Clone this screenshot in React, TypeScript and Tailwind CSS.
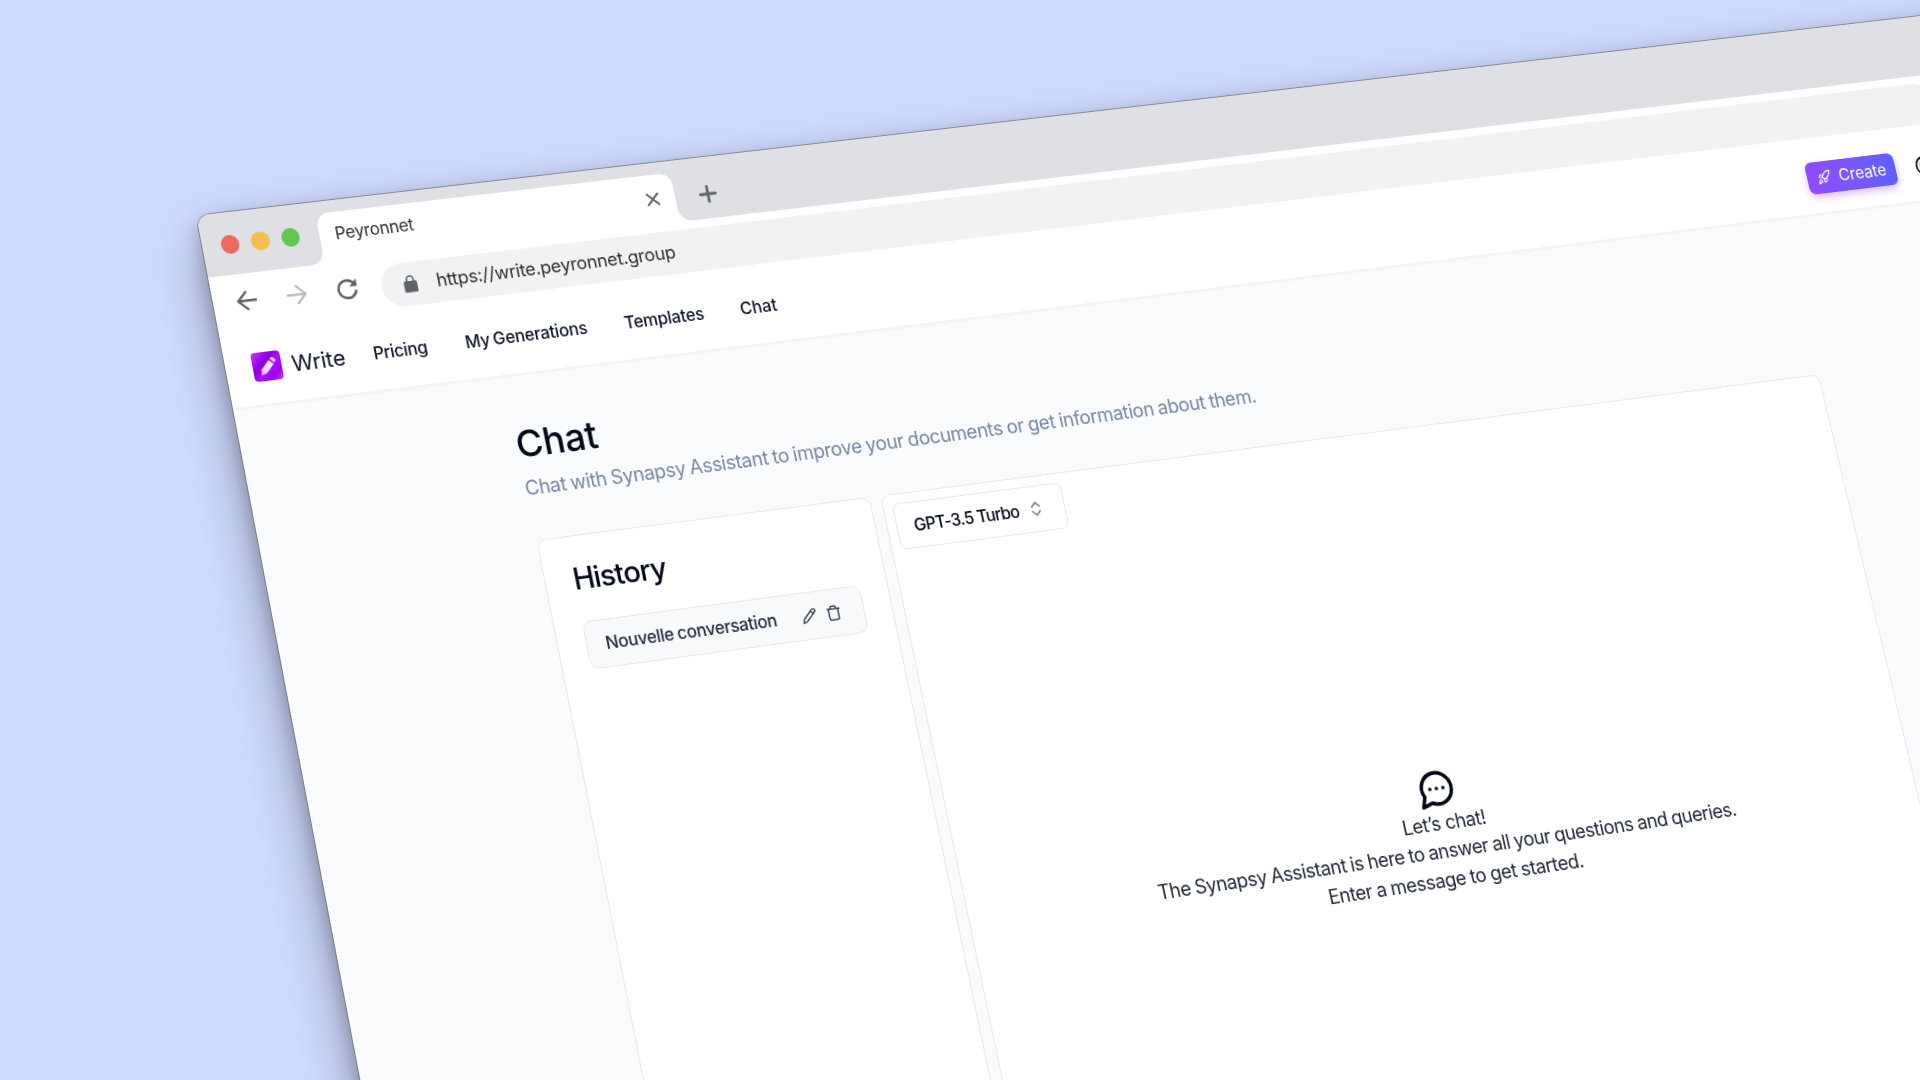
import React from 'react';
import { ChevronsUpDown, Pencil, Rocket } from 'lucide-react';

function TrafficLights() {
  return (
    <div className="flex gap-[11.9px] pl-[18.8px] pt-[23px]">
      <span className="size-[18.5px] rounded-full bg-[#ed6a5e]" />
      <span className="size-[18.5px] rounded-full bg-[#f5bf4f]" />
      <span className="size-[18.5px] rounded-full bg-[#62c554]" />
    </div>
  );
}

function TabStrip() {
  return (
    <div className="flex h-[62.7px] bg-[#dfe0e4]">
      <div className="w-[103.6px]">
        <TrafficLights />
      </div>
      <div className="size-[14px] self-end bg-white">
        <div className="h-full rounded-br-[14px] bg-[#dfe0e4]" />
      </div>
      <div className="mt-[11.6px] flex w-[365.3px] items-center justify-between rounded-t-[13px] bg-white pl-[16.2px] pr-[16.2px]">
        <span className="-mt-[6px] text-[17.2px] leading-5 tracking-[-0.32px] text-[#2f3032]">Peyronnet</span>
        <svg viewBox="0 0 14 14" className="size-[14px]" stroke="#5f6368" strokeWidth="2" fill="none" strokeLinecap="round">
          <path d="M1.5 1.5l11 11M12.5 1.5l-11 11" />
        </svg>
      </div>
      <div className="size-[14px] self-end bg-white">
        <div className="h-full rounded-bl-[14px] bg-[#dfe0e4]" />
      </div>
      <svg viewBox="0 0 18 18" className="ml-[11.4px] mt-[28.5px] size-[18px]" stroke="#5f6368" strokeWidth="2.8" fill="none" strokeLinecap="round">
        <path d="M9 1.2v15.6M1.2 9h15.6" />
      </svg>
    </div>
  );
}

function Toolbar() {
  return (
    <div className="flex h-[58.3px] items-start bg-white pt-[8px]">
      <div className="flex h-[39.5px] w-[170px] items-center">
        <svg viewBox="0 0 20 20" className="ml-[23.5px] size-[20.5px]" fill="none" stroke="#5f6368" strokeWidth="2.3" strokeLinecap="round" strokeLinejoin="round">
          <path d="M19 10H1.6M9.6 1.6L1.2 10l8.4 8.4" />
        </svg>
        <svg viewBox="0 0 20 20" className="ml-[30.2px] size-[20.5px]" fill="none" stroke="#babcbe" strokeWidth="2.3" strokeLinecap="round" strokeLinejoin="round">
          <path d="M1 10h17.4M10.4 1.6l8.4 8.4-8.4 8.4" />
        </svg>
        <svg viewBox="0 0 21 21" className="ml-[30px] size-[21px]" fill="none" stroke="#5f6368" strokeWidth="2.5">
          <path d="M17.8 5.8A8.9 8.9 0 1 0 19.2 12.6" />
          <path d="M20.4 1v7.6h-7.6z" fill="#5f6368" stroke="none" />
        </svg>
      </div>
      <div className="flex h-[44.2px] w-[1675px] items-center rounded-full bg-[#f1f2f4] pl-[22px]">
        <svg viewBox="0 0 15 19" className="h-[18px] w-[14.5px]" fill="#5f6368">
          <rect x="0.4" y="6.4" width="14.2" height="12.2" rx="1.8" />
          <path d="M3.9 7V4.6a3.6 3.6 0 0 1 7.2 0V7" fill="none" stroke="#5f6368" strokeWidth="1.7" />
        </svg>
        <span className="-mt-[2.5px] ml-[19.2px] text-[18.3px] leading-5 tracking-[-0.26px] text-[#2f3032]">https://write.peyronnet.group</span>
      </div>
    </div>
  );
}

function Logo() {
  return (
    <svg viewBox="0 0 29 29" className="-mt-[1.5px] size-[29px]">
      <defs>
        <linearGradient id="logo-bg" x1="0" y1="0" x2="1" y2="1">
          <stop offset="0" stopColor="#c83cff" />
          <stop offset="0.22" stopColor="#a80ff8" />
          <stop offset="0.38" stopColor="#8a00d4" />
          <stop offset="0.55" stopColor="#b010ff" />
          <stop offset="0.78" stopColor="#a000f5" />
          <stop offset="1" stopColor="#cc3cff" />
        </linearGradient>
        <linearGradient id="logo-pen" x1="1" y1="0" x2="0" y2="1">
          <stop offset="0" stopColor="#e6b8ff" />
          <stop offset="0.35" stopColor="#fff5ff" />
          <stop offset="1" stopColor="#e3a8ff" />
        </linearGradient>
      </defs>
      <rect width="29" height="29" rx="4" fill="url(#logo-bg)" />
      <path d="M17 8.9l4.2 4.1-8 8.2-5.4 1.6 1.2-5.6z" fill="url(#logo-pen)" strokeLinejoin="round" stroke="#ecc4ff" strokeWidth="0.6" />
      <path d="M18.2 7.7l1.1-1.1a1.7 1.7 0 0 1 2.4 0l1.6 1.6a1.7 1.7 0 0 1 0 2.4l-1.1 1.1z" fill="#efcaff" />
    </svg>
  );
}

function NavBar() {
  return (
    <header className="relative flex h-[74.3px] items-center bg-white pl-[26.8px] text-[17px] font-[450] leading-6 text-[#0b1324] shadow-[0_2px_3px_rgba(15,23,42,0.045)]">
      <Logo />
      <span className="-mt-px ml-[10.4px] w-[82.5px] text-[21.9px] font-normal tracking-[-0.1px]">Write</span>
      <nav className="-mt-px flex grow">
        <a className="w-[93.6px] tracking-[-0.3px]">Pricing</a>
        <a className="w-[163.4px] tracking-[-0.2px] [word-spacing:-1px]">My Generations</a>
        <a className="w-[120.2px] tracking-[-0.2px]">Templates</a>
        <a>Chat</a>
      </nav>
      <button className="mr-[21.6px] flex h-[33.3px] w-[99.8px] items-center rounded-[7px] bg-linear-to-r from-[#904bff] to-[#5c60ff] pl-[10.5px] font-normal text-white shadow-[0_4px_8px_rgba(147,51,234,0.3)]">
        <Rocket className="size-[16px]" strokeWidth={1.8} />
        <span className="ml-[8.9px] text-[17.3px] tracking-[-0.15px]">Create</span>
      </button>
      <svg viewBox="0 0 24 24" className="mr-[91.4px] size-[23px]" fill="none" stroke="currentColor" strokeWidth="2">
        <circle cx="12" cy="12" r="10" />
        <ellipse cx="12.5" cy="12" rx="5.5" ry="6" />
      </svg>
    </header>
  );
}

function HistoryCard() {
  return (
    <section className="h-[900px] w-[344px] rounded-[9.5px] border border-[#e4eaf2] bg-white pl-[28px] pt-[26.5px]">
      <h2 className="-ml-[0.3px] text-[29.3px] font-medium leading-[34px] tracking-[-0.9px]">History</h2>
      <div className="-ml-[0.7px] mt-[25px] flex h-[47.6px] w-[286.6px] items-center rounded-[9.5px] border border-[#e4eaf2] bg-[#f8fafc] pl-[19.3px] pr-[22.7px]">
        <span className="mt-px grow text-[17.2px] font-[450] leading-6 tracking-[-0.35px] [word-spacing:-0.5px] text-[#232b3d]">Nouvelle conversation</span>
        <Pencil className="size-[16px] text-[#232b3d]" strokeWidth={1.8} />
        <svg viewBox="0 0 24 24" className="ml-[9px] size-[16.5px]" fill="none" stroke="#232b3d" strokeWidth="1.9" strokeLinecap="round" strokeLinejoin="round">
          <path d="M3 6h18M19 6v14a2 2 0 0 1-2 2H7a2 2 0 0 1-2-2V6M8 6V4a2 2 0 0 1 2-2h4a2 2 0 0 1 2 2v2" />
        </svg>
      </div>
    </section>
  );
}

function ChatCard() {
  return (
    <section className="h-[900px] w-[1017px] rounded-[9.5px] border border-[#e4eaf2] bg-white px-[9.7px] pt-[9.8px]">
      <div className="flex h-[46.4px] w-[176.3px] items-center rounded-[7px] border border-[#e4eaf2] pl-[17px] text-[16.9px] font-[450] leading-6 tracking-[-0.63px]">
        <span className="mt-[1.5px] w-[119.2px]">GPT-3.5 Turbo</span>
        <ChevronsUpDown className="size-[19px] opacity-50" strokeWidth={2} />
      </div>
      <div className="mt-[287.8px] flex flex-col items-center text-[19.6px] leading-[28.6px] text-[#1d2434]">
        <svg viewBox="0 0 24 24" className="size-[42px]" fill="none" stroke="#020817" strokeWidth="2.1" strokeLinecap="round" strokeLinejoin="round">
          <path d="M7.9 20A9 9 0 1 0 4 16.1L2 22Z" />
          <path d="M8 12h.01M12 12h.01M16 12h.01" />
        </svg>
        <p className="tracking-[-0.45px]">Let’s chat!</p>
        <p className="tracking-[-0.5px] [word-spacing:-0.7px]">The Synapsy Assistant is here to answer all your questions and queries.</p>
        <p className="tracking-[-0.42px] [word-spacing:-0.6px]">Enter a message to get started.</p>
      </div>
    </section>
  );
}

export default function App() {
  return (
    <div className="h-[1080px] w-[1920px] overflow-hidden bg-[#cfdbff]" style={{ fontFamily: 'Inter, "Liberation Sans", sans-serif' }}>
      <div className="h-[1400px] w-[1920px] origin-top-left rounded-[13px] shadow-[0_0_0_1px_rgba(110,108,104,0.65),0_8px_20px_rgba(0,0,0,0.25),0_26px_56px_rgba(0,0,0,0.36)] [transform:matrix3d(1.00049,-0.107247,0,0.000036355,0.1808,0.97623,0,-0.0000289,0,0,1,0,196.3,215.7,0,1)]">
        <div className="h-full overflow-hidden rounded-[13px] bg-[#fafbfd] text-[#020817]">
          <TabStrip />
          <Toolbar />
          <NavBar />
          <main className="mx-auto w-[1371.6px] pt-[45.3px]">
            <h1 className="-ml-[1.5px] text-[37.3px] font-medium leading-[50px] tracking-[-0.1px]">Chat</h1>
            <p className="-ml-[1px] mt-[5.3px] text-[19.6px] leading-[28px] tracking-[-0.38px] [word-spacing:-0.9px] text-[#7787a0]">
              Chat with Synapsy Assistant to improve your documents or get information about them.
            </p>
            <div className="mt-[37.7px] flex gap-[10.4px]">
              <HistoryCard />
              <ChatCard />
            </div>
          </main>
        </div>
      </div>
    </div>
  );
}
